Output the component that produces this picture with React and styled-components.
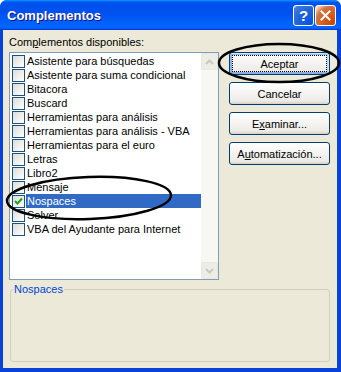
import React from "react";
import styled, { createGlobalStyle } from "styled-components";

const items = [
  "Asistente para búsquedas",
  "Asistente para suma condicional",
  "Bitacora",
  "Buscard",
  "Herramientas para análisis",
  "Herramientas para análisis - VBA",
  "Herramientas para el euro",
  "Letras",
  "Libro2",
  "Mensaje",
  "Nospaces",
  "Solver",
  "VBA del Ayudante para Internet",
];

const App = () => {
  return (
    <>
      <GlobalStyle />
      <Window>
        <TitleBar>
          <Title>Complementos</Title>
          <TitleButtons>
            <HelpButton>?</HelpButton>
            <CloseButton>
              <svg width="11" height="11" viewBox="0 0 11 11">
                <path d="M1.5 1.5 L9.5 9.5 M9.5 1.5 L1.5 9.5" stroke="#fff" strokeWidth="2" strokeLinecap="square" />
              </svg>
            </CloseButton>
          </TitleButtons>
        </TitleBar>

        <Body>
          <TopRow>
            <ListColumn>
              <FieldLabel>
                Com<u>p</u>lementos disponibles:
              </FieldLabel>
              <ListBox>
                <Items>
                  {items.map((name) => {
                    const on = name === "Nospaces";
                    return (
                      <Row key={name}>
                        <CheckBox>
                          {on && (
                            <svg width="11" height="11" viewBox="0 0 11 11">
                              <path d="M2 5 L4.5 7.5 L9 2.5" stroke="#21a121" strokeWidth="2" fill="none" />
                            </svg>
                          )}
                        </CheckBox>
                        <ItemText selected={on}>{name}</ItemText>
                      </Row>
                    );
                  })}
                </Items>
                <ScrollBar>
                  <ScrollButton>
                    <svg width="9" height="6" viewBox="0 0 9 6">
                      <path d="M1 5 L4.5 1.5 L8 5" stroke="#c9c8bd" strokeWidth="2" fill="none" />
                    </svg>
                  </ScrollButton>
                  <ScrollButton>
                    <svg width="9" height="6" viewBox="0 0 9 6">
                      <path d="M1 1 L4.5 4.5 L8 1" stroke="#c9c8bd" strokeWidth="2" fill="none" />
                    </svg>
                  </ScrollButton>
                </ScrollBar>
              </ListBox>
            </ListColumn>

            <ButtonColumn>
              <Button primary>Aceptar</Button>
              <Button>Cancelar</Button>
              <Button>
                E<u>x</u>aminar...
              </Button>
              <Button>
                A<u>u</u>tomatización...
              </Button>
            </ButtonColumn>
          </TopRow>

          <GroupBox>
            <Legend>Nospaces</Legend>
          </GroupBox>
        </Body>

        <Marks width="341" height="372" viewBox="0 0 341 372">
          <ellipse cx="279" cy="63" rx="60" ry="19" />
          <ellipse cx="89" cy="198" rx="82" ry="21" transform="rotate(-2 89 198)" />
        </Marks>
      </Window>
    </>
  );
};

export default App;

const GlobalStyle = createGlobalStyle`
  html, body {
    margin: 0;
    padding: 0;
    background: #fff;
  }
`;

const Window = styled.div`
  position: relative;
  width: 341px;
  height: 372px;
  display: flex;
  flex-direction: column;
  font-family: "Liberation Sans", Arial, sans-serif;
  font-size: 11px;
  color: #000;
  border-radius: 7px 7px 0 0;
  overflow: hidden;
  background: #0842d8;
`;

const TitleBar = styled.div`
  height: 30px;
  flex: none;
  display: flex;
  align-items: center;
  justify-content: space-between;
  padding: 0 5px 0 7px;
  box-sizing: border-box;
  background: linear-gradient(
    180deg,
    #0997ff,
    #0053ee 8%,
    #0050ee 40%,
    #06f 88%,
    #06f 93%,
    #005bff 95%,
    #003dd7 96%,
    #003dd7
  );
`;

const Title = styled.span`
  font-family: "Liberation Sans", Arial, sans-serif;
  font-weight: bold;
  font-size: 13px;
  color: #fff;
  text-shadow: 1px 1px #0f1089;
  padding-top: 1px;
`;

const TitleButtons = styled.div`
  display: flex;
  gap: 1px;
  padding-top: 1px;
`;

const TitleButton = styled.div`
  width: 21px;
  height: 21px;
  box-sizing: border-box;
  border: 1px solid #fff;
  border-radius: 3px;
  display: flex;
  align-items: center;
  justify-content: center;
  color: #fff;
`;

const HelpButton = styled(TitleButton)`
  background: radial-gradient(circle at 90% 90%, #0054e9 0%, #2263d5 55%, #4479e4 90%, #fff 100%);
  font-family: "Liberation Sans", Arial, sans-serif;
  font-weight: bold;
  font-size: 15px;
`;

const CloseButton = styled(TitleButton)`
  background: radial-gradient(circle at 90% 90%, #cc4600 0%, #dc6527 55%, #cd7546 70%, #ffccb2 90%, #fff 100%);
`;

const Body = styled.div`
  flex: 1;
  display: flex;
  flex-direction: column;
  margin: 0 4px 4px 3px;
  padding: 6px 7px 6px 6px;
  background: #ece9d8;
`;

const TopRow = styled.div`
  display: flex;
  gap: 10px;
`;

const ListColumn = styled.div`
  display: flex;
  flex-direction: column;
  width: 210px;
`;

const FieldLabel = styled.div`
  line-height: 13px;
  margin-bottom: 3px;
  white-space: nowrap;
`;

const ListBox = styled.div`
  height: 228px;
  box-sizing: border-box;
  border: 1px solid #7f9db9;
  background: #fff;
  display: flex;
`;

const Items = styled.div`
  flex: 1;
  padding-top: 1px;
  display: flex;
  flex-direction: column;
`;

const Row = styled.div`
  height: 14px;
  display: flex;
  align-items: center;
`;

const CheckBox = styled.div`
  width: 13px;
  height: 13px;
  box-sizing: border-box;
  margin-left: 2px;
  border: 1px solid #1c5180;
  background: linear-gradient(135deg, #dcdcd7, #fff);
  display: flex;
  align-items: center;
  justify-content: center;
`;

const ItemText = styled.div`
  flex: 1;
  height: 14px;
  line-height: 14px;
  margin-left: 1px;
  padding-left: 1px;
  white-space: nowrap;
  background: ${(p) => (p.selected ? "#316ac5" : "transparent")};
  color: ${(p) => (p.selected ? "#fff" : "#000")};
`;

const ScrollBar = styled.div`
  width: 17px;
  display: flex;
  flex-direction: column;
  justify-content: space-between;
  background: #f7f7f3;
`;

const ScrollButton = styled.div`
  height: 17px;
  box-sizing: border-box;
  border: 1px solid #e9e8e0;
  border-radius: 2px;
  background: #eeede5;
  display: flex;
  align-items: center;
  justify-content: center;
`;

const ButtonColumn = styled.div`
  width: 101px;
  padding-top: 16px;
  display: flex;
  flex-direction: column;
  gap: 7px;
`;

const Button = styled.div`
  height: 23px;
  flex: none;
  box-sizing: border-box;
  border: 1px solid #003c74;
  border-radius: 3px;
  background: linear-gradient(180deg, #fff, #ecebe6 86%, #d6d0c5);
  display: flex;
  align-items: center;
  justify-content: center;
  white-space: nowrap;
  ${(p) =>
    p.primary &&
    `
    box-shadow: inset -1px 1px #cee7ff, inset 1px 2px #98b8ea,
      inset -2px 2px #bcd4f6, inset 1px -1px #89ade4, inset 2px -2px #89ade4;
    outline: 1px dotted #000;
    outline-offset: -4px;
  `}
`;

const GroupBox = styled.fieldset`
  margin: 3px 0 0 1px;
  padding: 0 2px;
  width: 320px;
  height: 79px;
  box-sizing: border-box;
  border: 1px solid #d0d0bf;
  border-radius: 3px;
`;

const Legend = styled.legend`
  padding: 0 1px;
  color: #0046d5;
  line-height: 13px;
`;

const Marks = styled.svg`
  position: absolute;
  left: 0;
  top: 0;
  pointer-events: none;
  fill: none;
  stroke: #000;
  stroke-width: 2.5;
`;
